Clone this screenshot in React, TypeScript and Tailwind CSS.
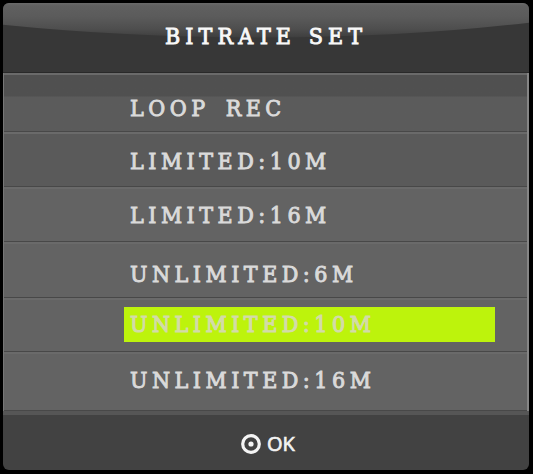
import clsx from 'clsx'

type Item = {
  label: string
  row: string
  selected?: boolean
}

const items: Item[] = [
  { label: 'LOOP REC', row: 'h-[59px] pt-[16px] bg-linear-to-b from-[#505050] from-[21px] to-[#5b5b5b] to-[22px]' },
  { label: 'LIMITED:10M', row: 'h-[55px] pt-[10px] bg-[#5a5a5a]' },
  { label: 'LIMITED:16M', row: 'h-[55px] pt-[9px] bg-[#636363]' },
  { label: 'UNLIMITED:6M', row: 'h-[56px] pt-[13px] bg-[#636363]' },
  { label: 'UNLIMITED:10M', row: 'h-[54px] pt-[7px] bg-[#636363]', selected: true },
  { label: 'UNLIMITED:16M', row: 'h-[59px] pt-[9px] bg-[#636363]' },
]

function Header() {
  return (
    <header className="relative h-[70px] border-b border-[#292929] bg-[#373737]">
      <svg className="absolute inset-0 h-full w-full" viewBox="0 0 526 70" preserveAspectRatio="none">
        <defs>
          <linearGradient id="gloss" x1="0" y1="0" x2="0" y2="1">
            <stop offset="0" stopColor="#6a6a6a" />
            <stop offset="0.08" stopColor="#606060" />
            <stop offset="0.4" stopColor="#5b5b5b" />
            <stop offset="0.75" stopColor="#4e4e4e" />
            <stop offset="1" stopColor="#3e3e3e" />
          </linearGradient>
        </defs>
        <path d="M0 0H526V20Q400 35 263 35T0 22Z" fill="url(#gloss)" />
      </svg>
      <h1 className="relative pt-[15px] pl-[162px] text-[23px] leading-[36px] font-normal tracking-[5.1px] [word-spacing:1px] whitespace-pre text-[#f8f8f8] [-webkit-text-stroke:0.9px_#f8f8f8]">
        BITRATE SET
      </h1>
    </header>
  )
}

function MenuRow({ item }: { item: Item }) {
  return (
    <li className={clsx('border-t-2 border-b border-t-[#6a6a6a] border-b-[#484848] pl-[120px]', item.row)}>
      <div
        className={clsx(
          'h-[35px] w-[371px] pl-[6px] text-[23px] leading-[35px] tracking-[4.5px] [word-spacing:5px] whitespace-pre',
          item.selected
            ? 'bg-[#bdf30c] text-[#d3dba8] [-webkit-text-stroke:1.1px_#d3dba8]'
            : 'text-[#dadada] [-webkit-text-stroke:0.9px_#dadada]',
        )}
      >
        {item.label}
      </div>
    </li>
  )
}

function Footer() {
  return (
    <footer className="flex h-[59px] items-center border-t-4 border-[#565656] bg-[#424242] pt-[3px] pl-[237px]">
      <svg width="22" height="22" viewBox="0 0 22 22">
        <circle cx="11" cy="11" r="8.3" fill="none" stroke="#f5f5f5" strokeWidth="3.2" />
        <circle cx="11" cy="11" r="2.6" fill="#f5f5f5" />
      </svg>
      <span className="pl-[5px] font-['Open_Sans',sans-serif] text-[20px] leading-6 text-[#f2f2f2] [-webkit-text-stroke:0.7px_#f2f2f2]">
        OK
      </span>
    </footer>
  )
}

export default function App() {
  return (
    <div className="h-[474px] w-[533px] bg-black pt-[3px] pl-[3px] font-['DejaVu_Serif_Condensed','DejaVu_Serif',serif]">
      <div className="w-[526px] overflow-hidden rounded-[6px]">
        <Header />
        <ul className="border-r-2 border-l border-r-[#858585] border-l-[#777]">
          {items.map((item) => (
            <MenuRow key={item.label} item={item} />
          ))}
        </ul>
        <Footer />
      </div>
    </div>
  )
}
